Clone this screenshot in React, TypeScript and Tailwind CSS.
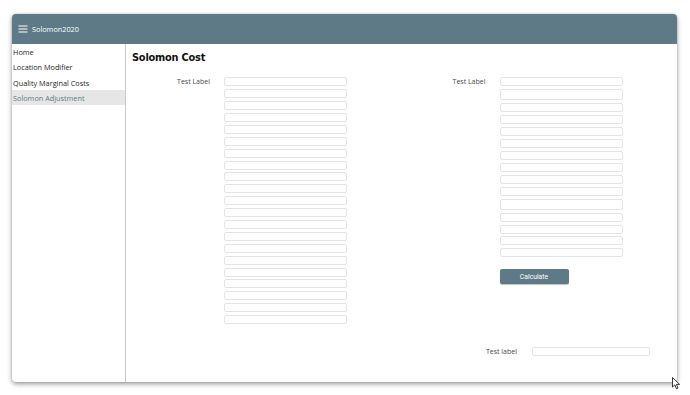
import React from 'react'

// ── Layout data ───────────────────────────────────────────────────────────────

const NAV_ITEMS = ['Home', 'Location Modifier', 'Quality Marginal Costs', 'Solomon Adjustment']
const ACTIVE_NAV = 'Solomon Adjustment'

const LEFT_INPUTS  = Array.from({ length: 21 }, () => false)
// true = slightly taller field
const RIGHT_INPUTS = [false, true, false, false, false, false, false, false, false, false, true, false, false, false, false]

const UI_FONT = { fontFamily: '"Open Sans", "Noto Sans", sans-serif' }

// ── Pieces ────────────────────────────────────────────────────────────────────

function Field({ tall = false, width = 'w-[123px]' }: { tall?: boolean; width?: string }) {
  return (
    <input
      className={`${width} ${tall ? 'h-[11.3px]' : 'h-[9px]'} rounded-[2px] border border-[#e2e4e8] bg-white outline-none`}
    />
  )
}

function FormColumn({ fields, children }: { fields: boolean[]; children?: React.ReactNode }) {
  return (
    <div className="flex items-start">
      <div className="w-[84px] h-[9px] text-right text-[7px] leading-[9px] text-[#4a4a4a]" style={UI_FONT}>
        Test Label
      </div>
      <div className="ml-[14px] flex flex-col">
        <div className="flex flex-col gap-[2.9px]">
          {fields.map((tall, i) => <Field key={i} tall={tall} />)}
        </div>
        {children}
      </div>
    </div>
  )
}

function Hamburger() {
  return (
    <svg width="10" height="8" viewBox="0 0 10 8" className="block">
      <rect x="0.5" y="0.5" width="9" height="1" fill="#fff" />
      <rect x="0.5" y="3.5" width="9" height="1" fill="#fff" />
      <rect x="0.5" y="6.5" width="9" height="1" fill="#fff" />
    </svg>
  )
}

function Cursor() {
  return (
    <svg width="9" height="13" viewBox="0 0 9 13" className="absolute left-[672px] top-[377px]">
      <path d="M0.5 0.5 L0.5 10 L2.8 7.9 L4.5 11.8 L6 11.1 L4.4 7.4 L7.6 7.4 Z" fill="#fff" stroke="#222" strokeWidth="0.9" strokeLinejoin="round" />
    </svg>
  )
}

// ── Page ──────────────────────────────────────────────────────────────────────

export default function App() {
  return (
    <div className="relative w-[690px] h-[395px] bg-white pl-[12px] pt-[14px]">
      <div className="w-[665px] h-[368px] rounded-[4px] overflow-hidden bg-white flex flex-col shadow-[0_2px_5px_rgba(0,0,0,0.4),0_0_2px_rgba(0,0,0,0.15)]">
        {/* Top bar */}
        <div className="h-[30px] shrink-0 bg-[#5e7a87] flex items-center pl-[6px]">
          <Hamburger />
          <span className="ml-[4px] text-[7.3px] text-white" style={UI_FONT}>Solomon2020</span>
        </div>

        <div className="flex flex-1 min-h-0">
          {/* Sidebar */}
          <div className="w-[114px] shrink-0 border-r border-[#c9c9c9] flex flex-col">
            {NAV_ITEMS.map(item => (
              <div
                key={item}
                className={`h-[15.33px] leading-[17px] pl-[1px] text-[7.3px] ${item === ACTIVE_NAV ? 'bg-[#e6e6e6] text-[#5e7a87]' : 'text-[#1e1e1e]'}`}
                style={UI_FONT}
              >
                {item}
              </div>
            ))}
          </div>

          {/* Main */}
          <div className="flex-1 flex flex-col pt-[7px]">
            <h1 className="pl-[6px] h-[14px] leading-[14px] text-[9.8px] font-bold text-[#111] tracking-[-0.2px]" style={{ fontFamily: '"DejaVu Sans", Verdana, sans-serif' }}>
              Solomon Cost
            </h1>

            <div className="mt-[12.3px] grid grid-cols-2 items-start">
              <FormColumn fields={LEFT_INPUTS} />
              <FormColumn fields={RIGHT_INPUTS}>
                <button
                  className="mt-[12px] w-[69px] h-[15px] rounded-[2px] bg-[#5e7a87] text-white text-[6.8px] shadow-[0_1px_1px_rgba(0,0,0,0.25)]"
                  style={{ fontFamily: 'Roboto, sans-serif' }}
                >
                  Calculate
                </button>
              </FormColumn>
            </div>

            <div className="mt-[23px] flex items-center justify-end pr-[27px]">
              <span className="text-[7px] leading-[9px] text-[#4a4a4a]" style={UI_FONT}>Test label</span>
              <div className="ml-[15px] flex">
                <Field width="w-[118px]" />
              </div>
            </div>
          </div>
        </div>
      </div>
      <Cursor />
    </div>
  )
}
